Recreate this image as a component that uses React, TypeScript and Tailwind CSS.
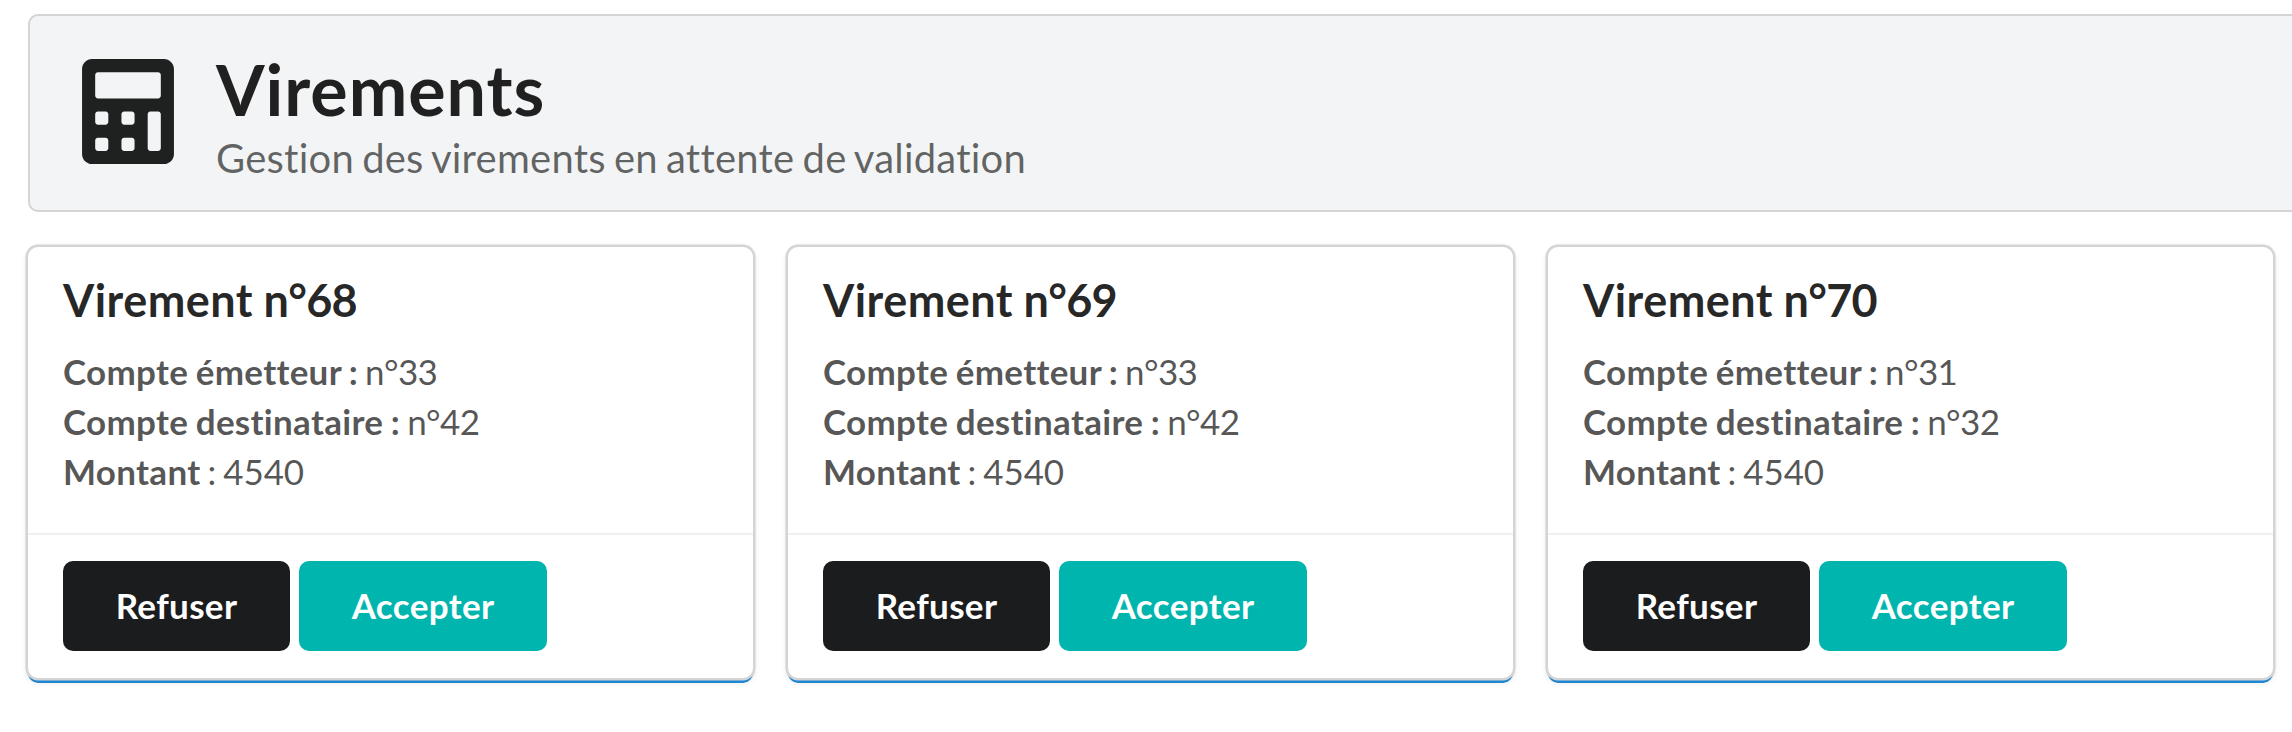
import { FaCalculator } from "react-icons/fa";

type Transfer = { id: number; from: number; to: number; amount: number };

const transfers: Transfer[] = [
  { id: 68, from: 33, to: 42, amount: 4540 },
  { id: 69, from: 33, to: 42, amount: 4540 },
  { id: 70, from: 31, to: 32, amount: 4540 },
];

function PageHeader() {
  return (
    <header className="ml-7 flex w-[2300px] rounded-[10px] border-2 border-[#d4d4d5] bg-[#f3f4f5] py-7 pl-[35.5px]">
      <div className="flex w-[124px] shrink-0 justify-center pt-[15px]">
        <FaCalculator className="h-[105px] w-[92px] text-[#1f2120]" />
      </div>
      <div className="pl-[26.5px]">
        <h1 className="text-[70px] leading-[90px] font-bold tracking-[0.95px] text-black/87">Virements</h1>
        <p className="text-[40px] leading-[48px] tracking-[0.23px] text-black/60 [word-spacing:-2.3px]">
          Gestion des virements en attente de validation
        </p>
      </div>
    </header>
  );
}

function Field({ label, value }: { label: string; value: number }) {
  return (
    <p>
      <b className="tracking-[0.3px] [word-spacing:-1.3px]">{label} :</b>{" "}
      <span className="tracking-[-0.6px]">n°{value}</span>
    </p>
  );
}

function TransferCard({ transfer }: { transfer: Transfer }) {
  return (
    <article className="w-[725px] shrink-0 rounded-[10px] bg-white shadow-[0_0_0_2.5px_#d4d4d5,0_5px_0_0_#2185d0,0_2.5px_7.5px_0_#d4d4d5]">
      <div className="px-[35px] pt-[25.4px] pb-[36.75px]">
        <h2 className="text-[45px] leading-[57.85px] font-bold tracking-[0.45px] text-black/85 [word-spacing:-0.9px]">
          Virement <span className="tracking-[-0.7px]">n°{transfer.id}</span>
        </h2>
        <div className="mt-[16.5px] text-[35px] leading-[50px] text-black/68 [word-spacing:-2px]">
          <Field label="Compte émetteur" value={transfer.from} />
          <Field label="Compte destinataire" value={transfer.to} />
          <p>
            <b className="tracking-[0.3px]">Montant</b> :{" "}
            <span className="tracking-[-0.1px]">{transfer.amount}</span>
          </p>
        </div>
      </div>
      <div className="flex gap-[9px] border-t-2 border-[#222426]/7 px-[35px] pt-[26.25px] pb-[26.75px] text-[35px] leading-[35px] font-bold tracking-[0.35px] text-white">
        <button className="w-[227px] rounded-[10px] bg-[#1b1c1d] pt-[26.75px] pb-[28.25px]">Refuser</button>
        <button className="w-[248px] rounded-[10px] bg-[#00b5ad] pt-[26.75px] pb-[28.25px]">Accepter</button>
      </div>
    </article>
  );
}

export default function App() {
  return (
    <div className="h-[732px] w-full overflow-hidden bg-white pt-3.5 font-['Lato',sans-serif] [font-variant-ligatures:none]">
      <PageHeader />
      <main className="mt-[34.5px] flex gap-[35px] pl-7">
        {transfers.map((t) => (
          <TransferCard key={t.id} transfer={t} />
        ))}
      </main>
    </div>
  );
}
